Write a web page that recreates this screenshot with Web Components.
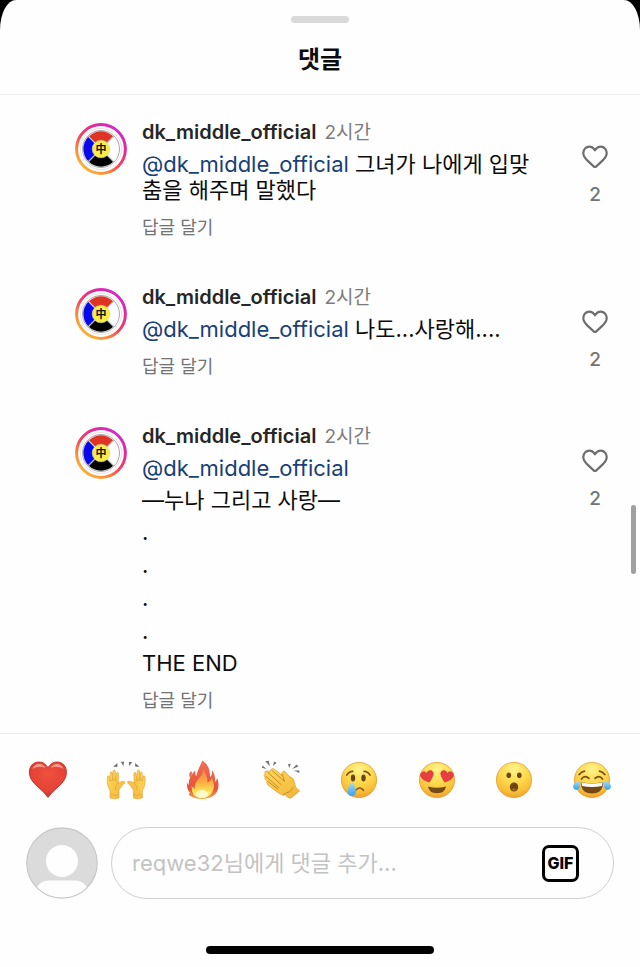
<!DOCTYPE html>
<html lang="ko">
<head>
<meta charset="utf-8">
<meta name="viewport" content="width=device-width, initial-scale=1">
<title>댓글</title>
<style>
  html, body { margin: 0; background: #000; }
  body {
    font-family: Inter, "Noto Sans CJK KR", sans-serif;
    color: #0c0c0c;
  }
</style>
</head>
<body>
<comment-sheet>
  <sheet-header slot="header">댓글</sheet-header>

  <user-comment user="dk_middle_official" time="2시간" likes="2">
    <p><user-mention>dk_middle_official</user-mention> 그녀가 나에게 입맞춤을 해주며 말했다</p>
  </user-comment>

  <user-comment user="dk_middle_official" time="2시간" likes="2">
    <p><user-mention>dk_middle_official</user-mention> 나도...사랑해....</p>
  </user-comment>

  <user-comment user="dk_middle_official" time="2시간" likes="2">
    <p><user-mention>dk_middle_official</user-mention></p>
    <p>—누나 그리고 사랑—</p>
    <comment-dots></comment-dots>
    <p>THE END</p>
  </user-comment>

  <emoji-bar slot="footer"></emoji-bar>
  <comment-composer slot="footer" placeholder="reqwe32님에게 댓글 추가..."></comment-composer>
</comment-sheet>

<script>
class CommentSheet extends HTMLElement {
  constructor() {
    super();
    this.attachShadow({ mode: "open" });
  }

  connectedCallback() {
    this.shadowRoot.innerHTML = `
      <style>
        :host {
          display: flex;
          flex-direction: column;
          min-height: 100vh;
          background: #fefefe;
          border-radius: 16px 16px 0 0 / 30px 30px 0 0;
        }
        main {
          position: relative;
          flex: 1;
          display: flex;
          flex-direction: column;
          gap: 44px;
          padding: 24px 32px 20px 75px;
        }
        .thumb {
          position: absolute;
          right: 4px;
          top: 410px;
          width: 5px;
          height: 69px;
          border-radius: 3px;
          background: #a0a0a0;
        }
        footer {
          border-top: 1px solid #ececec;
        }
        .home {
          width: 228px;
          height: 8px;
          margin: 47px auto 13px;
          border-radius: 4px;
          background: #000;
        }
      </style>
      <slot name="header"></slot>
      <main>
        <slot></slot>
        <div class="thumb"></div>
      </main>
      <footer>
        <slot name="footer"></slot>
        <div class="home"></div>
      </footer>
    `;
  }
}
customElements.define("comment-sheet", CommentSheet);

class SheetHeader extends HTMLElement {
  constructor() {
    super();
    this.attachShadow({ mode: "open" });
  }

  connectedCallback() {
    this.shadowRoot.innerHTML = `
      <style>
        :host {
          display: flex;
          flex-direction: column;
          align-items: center;
          padding: 16px 0 18px;
          border-bottom: 1px solid #ececec;
        }
        .grip {
          width: 58px;
          height: 7px;
          border-radius: 4px;
          background: #d9d9d9;
        }
        h1 {
          margin: 20px 0 0;
          font-size: 24px;
          line-height: 33px;
          font-weight: 700;
        }
      </style>
      <div class="grip"></div>
      <h1><slot></slot></h1>
    `;
  }
}
customElements.define("sheet-header", SheetHeader);

class StoryAvatar extends HTMLElement {
  constructor() {
    super();
    this.attachShadow({ mode: "open" });
  }

  connectedCallback() {
    this.shadowRoot.innerHTML = `
      <style>
        :host { display: block; width: 52px; height: 52px; }
        svg { display: block; }
        text { font: 700 11px "Noto Sans CJK KR", sans-serif; }
      </style>
      <svg width="52" height="52" viewBox="0 0 52 52" role="img" aria-label="프로필 사진">
        <defs>
          <linearGradient id="ring" x1="0.15" y1="0.95" x2="0.8" y2="0.1">
            <stop offset="0" stop-color="#fbb83a"/>
            <stop offset="0.25" stop-color="#f98a38"/>
            <stop offset="0.5" stop-color="#f4405c"/>
            <stop offset="0.8" stop-color="#e22a9b"/>
            <stop offset="1" stop-color="#d62ac4"/>
          </linearGradient>
        </defs>
        <circle cx="26" cy="26" r="24.4" fill="#fff" stroke="url(#ring)" stroke-width="3"/>
        <circle cx="26" cy="26" r="20.5" fill="none" stroke="#e4e4e4" stroke-width="1"/>
        <circle cx="26" cy="26" r="18.5" fill="#fff" stroke="#aaa" stroke-width="1"/>
        <path d="M26 26L13.5 13.5A17.7 17.7 0 0 1 38.5 13.5Z" fill="#df3324"/>
        <path d="M26 26L13.5 13.5A17.7 17.7 0 0 0 13.5 38.5Z" fill="#0808ee"/>
        <path d="M26 26L13.5 38.5A17.7 17.7 0 0 0 38.5 38.5Z" fill="#000"/>
        <path d="M13 13L39 39M39 13L13 39" stroke="#c4c4c4" stroke-width="1.2"/>
        <circle cx="26" cy="26" r="8.8" fill="#f8ee42" stroke="#d8d09a" stroke-width="0.6"/>
        <text x="26" y="30" text-anchor="middle" fill="#111">中</text>
      </svg>
    `;
  }
}
customElements.define("story-avatar", StoryAvatar);

class UserMention extends HTMLElement {
  constructor() {
    super();
    this.attachShadow({ mode: "open" });
  }

  connectedCallback() {
    this.shadowRoot.innerHTML = `
      <style>
        :host { display: inline; }
        a { color: #173f78; text-decoration: none; }
      </style>
      <a href="#profile">@<slot></slot></a>`;
  }
}
customElements.define("user-mention", UserMention);

class CommentDots extends HTMLElement {
  constructor() {
    super();
    this.attachShadow({ mode: "open" });
  }

  connectedCallback() {
    this.shadowRoot.innerHTML = `
      <style>
        :host { display: grid; gap: 7px; }
      </style>
      <div>.</div>
      <div>.</div>
      <div>.</div>
      <div>.</div>
    `;
  }
}
customElements.define("comment-dots", CommentDots);

class UserComment extends HTMLElement {
  constructor() {
    super();
    this.attachShadow({ mode: "open" });
  }

  connectedCallback() {
    this.shadowRoot.innerHTML = `
      <style>
        :host {
          display: flex;
          align-items: flex-start;
          gap: 15px;
        }
        story-avatar { margin-top: 4px; }
        .body { flex: 1; min-width: 0; }
        .meta {
          display: flex;
          align-items: baseline;
          gap: 8px;
          line-height: 26px;
          font-size: 19px;
          color: #7c7c7c;
        }
        .meta a {
          font-size: 20px;
          font-weight: 600;
          color: #262626;
          text-decoration: none;
        }
        .text {
          display: flex;
          flex-direction: column;
          gap: 6px;
          margin: 5px 0 13px;
          font-size: 22px;
          line-height: 26px;
          word-break: break-all;
        }
        ::slotted(p) { margin: 0; }
        button {
          padding: 0;
          border: none;
          background: none;
          font-family: inherit;
          color: #737373;
          cursor: pointer;
        }
        .reply {
          display: block;
          font-size: 18px;
          line-height: 24px;
        }
        .like {
          display: flex;
          flex-direction: column;
          align-items: center;
          gap: 14px;
          width: 26px;
          margin: 26px 0 0 22px;
          font-size: 19px;
          line-height: 24px;
          font-weight: 500;
        }
      </style>
      <story-avatar></story-avatar>
      <div class="body">
        <div class="meta">
          <a href="#profile">${this.getAttribute("user")}</a>
          <span>${this.getAttribute("time")}</span>
        </div>
        <div class="text"><slot></slot></div>
        <button class="reply">답글 달기</button>
      </div>
      <button class="like" aria-label="좋아요">
        <svg width="26" height="24" viewBox="0 0 26 24" fill="none" stroke="#6e6e6e" stroke-width="2.2" stroke-linejoin="round">
          <path d="M13 5.3C11.6 2.9 9.6 1.6 7.3 1.6C3.9 1.6 1.3 4.4 1.3 8.1C1.3 11.3 3.1 13.5 5.5 15.6L11.7 21.4C12.5 22.2 13.5 22.2 14.3 21.4L20.5 15.6C22.9 13.5 24.7 11.3 24.7 8.1C24.7 4.4 22.1 1.6 18.7 1.6C16.4 1.6 14.4 2.9 13 5.3Z"/>
        </svg>
        <span>${this.getAttribute("likes")}</span>
      </button>
    `;
  }
}
customElements.define("user-comment", UserComment);

const face = `<circle cx="20" cy="20" r="17.6" fill="url(#face)" stroke="#e39a2c" stroke-width="0.8"/>`;
const hand = `
  <path d="M4 38V30C1.5 27 1 23 1.3 18Q1.5 15 3 16L4 21L4.2 13Q5 10.5 6.2 13L6.6 20L7 11Q8.2 8.5 9.2 11L9.4 20L10.5 13Q11.8 11.2 12.5 13.5L12.3 23Q14 22 17 21.2Q19.6 21.3 18.6 23Q15 26 13 30V38Q8.5 39.5 4 38Z" fill="url(#skin)" stroke="#dfa02f" stroke-width="0.6"/>
  <path d="M4.3 21Q8 18.5 11.5 22.5M9.2 30Q9 25.5 12.3 23M4.5 34.5Q9 36 13 34.5" fill="none" stroke="#dda238" stroke-width="0.7"/>`;

const EMOJIS = [
  ["하트", `
    <path d="M20 37.5Q17 33 10 27C4.5 22 1.4 18 1.4 12.2C1.4 6 5.5 2 11 2C15.2 2 18.4 4.4 20 8.2C21.6 4.4 24.8 2 29 2C34.5 2 38.4 6 38.4 12.2C38.4 18 35.5 22 30 27Q23 33 20 37.5Z" fill="url(#heart)" stroke="#b92f2b" stroke-width="0.9"/>
    <path d="M4.5 9Q6.5 4 11 4T17.5 8Q11 5.2 4.5 9ZM22.5 8Q25 4 29 4T35.5 9Q29 5.2 22.5 8Z" fill="#ffb7a7" opacity="0.75"/>`],
  ["만세", `
    ${hand}
    <g transform="translate(40.4 0) scale(-1 1)">${hand}</g>
    <path d="M7.2 7L11.3 3.1L11.4 6.7ZM14.8 1.8L18 1.8L17.4 6ZM23 1.8L26 2.2L23.2 6ZM29.2 3.1L33.4 7L29.2 6.6Z" fill="#68696b"/>`],
  ["불", `
    <path d="M19.2 0.5C17.5 6 14.5 9.5 13.4 16C12 14.5 12 11.8 12.5 10Q5 17.5 5.7 25C3.8 24 4 22 4.2 20Q2.8 28 7 33Q5.8 33.5 6 35Q11 39 19 39C28.5 39 35.5 34 35.5 25Q35.7 20 33.8 17.8Q34 21 32 22C32.4 16 31 13 29 10.3Q29.2 16 27.2 17C26.8 10 25.4 4.2 19.2 0.5Z" fill="url(#fire)"/>
    <path d="M8.3 11Q5 13.5 6.8 17.2Q10.5 15 8.3 11Z" fill="#ef7351"/>
    <path d="M20 9Q24.5 16 24.5 22.5Q28 21 29 18Q33.5 27 28 34Q23 38.5 18 38Q8 37 8.6 26L12 29Q11 24 15 19.5Q20 15 20 9Z" fill="url(#flame)"/>
    <ellipse cx="19" cy="34" rx="6" ry="4" fill="#fffde0" opacity="0.8"/>`],
  ["박수", `
    <path d="M4 14Q3 11 6 11L9.5 11.5Q10 7.5 13 9L22 16L21 12.5Q22.5 10 24.5 12L29 17Q32 17 33 21L34.5 27L38.6 31L30 38Q27.5 39 24 34.5Q20 35.5 16 32L7 25Q4.8 22.8 6.4 21Q3 19 4 17Q2.5 15.5 4 14Z" fill="url(#skin)" stroke="#dc9b2c" stroke-width="0.7"/>
    <path d="M6.5 12L20 24.5M5 16.5L17.5 27.5M7 21.5L16.5 29M11 10.5L23.5 21.5Q22.5 17 20.5 14M22 35.5L25 33Q29 33 32 28" fill="none" stroke="#c68a29" stroke-width="1" stroke-linecap="round"/>
    <path d="M0.8 7.8L5.6 9L1.6 5.5ZM4.2 1.3L9 6.3L7.8 0.8ZM13 1.5L12 6L15.6 2.8ZM27 4L28.3 8.2L29.8 3.8ZM35.5 4.5L31.2 9L37.5 6.5ZM32.8 10.5L38.4 10.5L38.3 13Z" fill="#707476"/>`],
  ["눈물", `
    ${face}
    <ellipse cx="14" cy="18" rx="2.2" ry="3.4" fill="#6b4513"/><ellipse cx="24.5" cy="18" rx="2.2" ry="3.4" fill="#6b4513"/>
    <path d="M7.8 15.2Q9.5 11.6 13.8 11.4M25 11.4Q29.3 11.6 31 15.2M16.3 30.5Q21 25.5 24.5 30.3" fill="none" stroke="#81551a" stroke-width="1.6" stroke-linecap="round"/>
    <path d="M13 22Q8.5 27.5 8.5 31.6A4.3 4.3 0 0 0 17.1 31.6Q17 28 13 22Z" fill="url(#tear)"/>`],
  ["하트 눈", `
    ${face}
    <path d="M12.2 22.2Q5.4 20.2 3.8 16.6C2.4 12.4 7.6 9.8 9.6 13.5C11.3 8.6 17.6 10.3 16 15.3Q15 18.5 12.2 22.2Z" fill="#e83d42" stroke="#c92c2f" stroke-width="0.5"/>
    <path d="M27.8 22.2Q34.6 20.2 36.2 16.6C37.6 12.4 32.4 9.8 30.4 13.5C28.7 8.6 22.4 10.3 24 15.3Q25 18.5 27.8 22.2Z" fill="#e83d42" stroke="#c92c2f" stroke-width="0.5"/>
    <path d="M11 26.5Q20 29 29 26.5Q28 33.3 20 33.3T11 26.5Z" fill="#754918"/>`],
  ["놀람", `
    ${face}
    <ellipse cx="14.8" cy="15.3" rx="2.3" ry="2.8" fill="#70450f"/><ellipse cx="25.3" cy="15.3" rx="2.3" ry="2.8" fill="#70450f"/>
    <ellipse cx="20" cy="27" rx="4.2" ry="4.5" fill="#70450f"/>
    <path d="M17 29.5Q20 27 23 29.5Q20 32.5 17 29.5Z" fill="#96602a"/>`],
  ["기쁨의 눈물", `
    ${face}
    <path d="M7.2 14.6Q9.5 11.6 12.5 11.2M27.5 11.2Q30.5 11.6 32.8 14.6M9.5 19Q13 14.5 17 18.4M23 18.4Q27 14.5 30.5 19" fill="none" stroke="#7c4e16" stroke-width="1.7" stroke-linecap="round"/>
    <path d="M8.8 22Q20 24.5 31.2 22Q31 33.5 20 33.5T8.8 22Z" fill="#744817"/>
    <path d="M9.3 22.3Q20 24.7 30.7 22.3L30 26Q20 28 10 26Z" fill="#fff"/>
    <path d="M7.7 20.8Q1.2 22.2 1 26.5A3.5 3.5 0 0 0 7.9 27Q8.4 24 7.7 20.8ZM32.3 20.8Q38.8 22.2 39 26.5A3.5 3.5 0 0 1 32.1 27Q31.6 24 32.3 20.8Z" fill="url(#tear)"/>`]
];

class EmojiBar extends HTMLElement {
  constructor() {
    super();
    this.attachShadow({ mode: "open" });
  }

  connectedCallback() {
    const defs = `
      <defs>
        <radialGradient id="face" cx="0.5" cy="0.2" r="0.82">
          <stop offset="0" stop-color="#fff28b"/>
          <stop offset="0.45" stop-color="#fddb50"/>
          <stop offset="0.8" stop-color="#f8bd35"/>
          <stop offset="1" stop-color="#ed9b2d"/>
        </radialGradient>
        <linearGradient id="skin" x1="0" y1="0" x2="1" y2="1">
          <stop offset="0" stop-color="#ffdb5c"/><stop offset="1" stop-color="#f2b338"/>
        </linearGradient>
        <radialGradient id="heart" cx="0.5" cy="0.35" r="0.65">
          <stop offset="0" stop-color="#f0503d"/><stop offset="0.7" stop-color="#e44336"/><stop offset="1" stop-color="#cc3431"/>
        </radialGradient>
        <linearGradient id="fire" x1="0" y1="0" x2="0" y2="1">
          <stop offset="0" stop-color="#ef7151"/><stop offset="0.75" stop-color="#e9503d"/><stop offset="1" stop-color="#fab044"/>
        </linearGradient>
        <linearGradient id="flame" x1="0" y1="0" x2="0" y2="1">
          <stop offset="0" stop-color="#f28351"/><stop offset="0.45" stop-color="#f9ac41"/><stop offset="0.8" stop-color="#ffe65b"/><stop offset="1" stop-color="#fffac7"/>
        </linearGradient>
        <linearGradient id="tear" x1="0" y1="0" x2="0" y2="1">
          <stop offset="0" stop-color="#a5e0fb"/><stop offset="1" stop-color="#3d9fe8"/>
        </linearGradient>
      </defs>`;
    this.shadowRoot.innerHTML = `
      <style>
        :host {
          display: flex;
          justify-content: space-between;
          padding: 26px 28px 27px;
        }
        button {
          padding: 0;
          border: none;
          background: none;
          cursor: pointer;
        }
        svg { display: block; }
      </style>
      ${EMOJIS.map(([name, art]) => `
        <button aria-label="${name}">
          <svg width="40" height="40" viewBox="0 0 40 40">${defs}${art}</svg>
        </button>`).join("")}
    `;
  }
}
customElements.define("emoji-bar", EmojiBar);

class CommentComposer extends HTMLElement {
  constructor() {
    super();
    this.attachShadow({ mode: "open" });
  }

  connectedCallback() {
    const placeholder = this.getAttribute("placeholder");
    this.shadowRoot.innerHTML = `
      <style>
        :host {
          display: flex;
          align-items: center;
          gap: 13px;
          padding: 0 26px;
        }
        svg { flex: none; }
        .field {
          flex: 1;
          display: flex;
          align-items: center;
          box-sizing: border-box;
          height: 72px;
          padding: 0 34px 0 20px;
          border: 1px solid #cfcfcf;
          border-radius: 36px;
        }
        input {
          flex: 1;
          min-width: 0;
          padding: 0;
          border: none;
          outline: none;
          background: none;
          font-family: inherit;
          font-size: 22px;
          line-height: 32px;
          color: inherit;
        }
        input::placeholder { color: #c3c3c3; opacity: 1; }
        button {
          display: flex;
          align-items: center;
          justify-content: center;
          width: 37px;
          height: 37px;
          padding: 0;
          border: 3px solid #000;
          border-radius: 7px;
          background: none;
          font-family: inherit;
          font-size: 16px;
          font-weight: 800;
          color: #000;
          cursor: pointer;
        }
      </style>
      <svg width="72" height="72" viewBox="0 0 72 72" role="img" aria-label="내 프로필">
        <defs><clipPath id="disc"><circle cx="36" cy="36" r="35"/></clipPath></defs>
        <circle cx="36" cy="36" r="35" fill="#dbdbdb"/>
        <circle cx="36" cy="34" r="16" fill="#fefefe"/>
        <path clip-path="url(#disc)" d="M8 72Q9 53.5 24 53.5H48Q63 53.5 64 72Z" fill="#fefefe"/>
        <circle cx="36" cy="36" r="35.2" fill="none" stroke="#c6c6c6" stroke-width="1.2"/>
      </svg>
      <div class="field">
        <input type="text" placeholder="${placeholder}" aria-label="${placeholder}">
        <button>GIF</button>
      </div>
    `;
  }
}
customElements.define("comment-composer", CommentComposer);
</script>
</body>
</html>
